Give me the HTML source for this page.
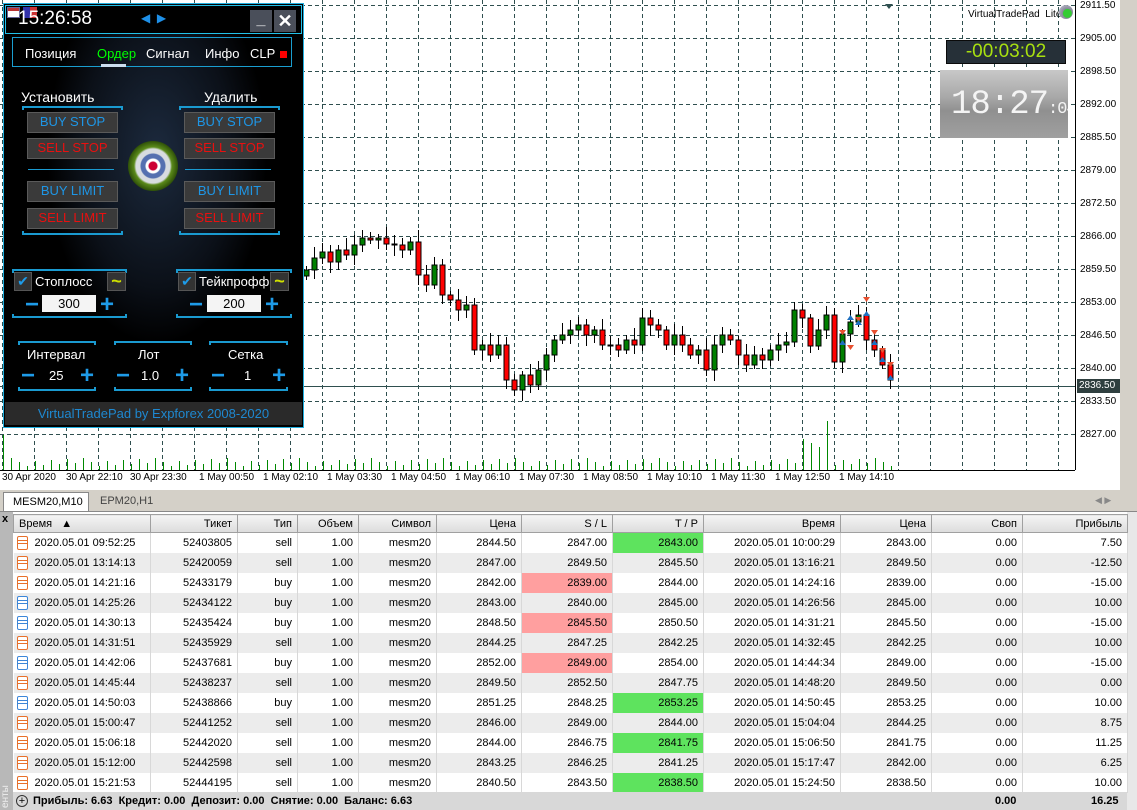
<!DOCTYPE html>
<html><head><meta charset="utf-8"><style>
*{margin:0;padding:0;box-sizing:border-box}
body{width:1137px;height:810px;overflow:hidden;background:#fff;font-family:"Liberation Sans",sans-serif;position:relative}
.a{position:absolute}
.pl{position:absolute;left:1080px;font-size:10px;color:#000}
.tl{position:absolute;top:472px;font-size:10px;color:#000}
.pb{position:absolute;background:#3a3a3a;border:1px solid #5a5a5a;font-size:13px;text-align:center;line-height:18px;height:21px}
.bl{color:#1e96e6}.rd{color:#e81010}
.br{position:absolute;height:4px;border:2px solid #1a9ad0;border-bottom:none}
.bb{position:absolute;height:4px;border:2px solid #1a9ad0;border-top:none}
.wt{color:#fff;position:absolute;font-size:14px}
.pm{position:absolute;color:#1e9be8;font-size:24px;font-weight:bold;line-height:20px}
table{border-collapse:collapse;position:absolute;left:13px;top:514px;font-size:11px;table-layout:fixed}
td,th{height:20px;padding:0 5px;text-align:right;white-space:nowrap;border-right:1px solid #d8d8d8}
th{font-weight:normal;border:1px solid #a0a0a0;height:18px;background:linear-gradient(#f4f4f4,#dcdcdc)}
tr.g td{background:#ececec}
td.p{background:#ff9f9f}td.t{background:#5ee35e}
td.f{text-align:left;padding-left:3px}
.ic{display:inline-block;width:11px;height:14px;border:1.5px solid #e8702a;border-radius:2px;vertical-align:middle;margin-right:7px;background:linear-gradient(#fff 3px,#e8702a 3px,#e8702a 4px,#fff 4px,#fff 6px,#e8702a 6px,#e8702a 7px,#fff 7px)}
.ib{border-color:#3c86d8;background:linear-gradient(#fff 3px,#3c86d8 3px,#3c86d8 4px,#fff 4px,#fff 6px,#3c86d8 6px,#3c86d8 7px,#fff 7px)}
</style></head><body>
<svg class="a" style="left:0;top:0" width="1137" height="490" id="ch">
<rect x="0" y="0" width="1075" height="470" fill="#fff"/>
<g id="grid" stroke="#2f4f4f" stroke-dasharray="4,3" stroke-width="1"></g>
<line x1="0" y1="386.5" x2="1075" y2="386.5" stroke="#2f4f4f"/>
<g id="cd"></g>
<line x1="1075.5" y1="0" x2="1075.5" y2="470" stroke="#000"/>
<line x1="0" y1="470.5" x2="1075" y2="470.5" stroke="#000"/>
<rect x="1120" y="0" width="17" height="490" fill="#d4d0c8"/>
<rect x="1077" y="379" width="43" height="14" fill="#2f3f3f"/>
<polygon points="885,4 893,4 889,9" fill="#2f4f4f"/>
</svg>
<div class="a" style="left:1079px;top:380px;font-size:10px;color:#fff">2836.50</div>
<div class="pl" style="top:0">2911.50</div><div class="pl" style="top:33px">2905.00</div><div class="pl" style="top:66px">2898.50</div><div class="pl" style="top:99px">2892.00</div><div class="pl" style="top:132px">2885.50</div><div class="pl" style="top:165px">2879.00</div><div class="pl" style="top:198px">2872.50</div><div class="pl" style="top:231px">2866.00</div><div class="pl" style="top:264px">2859.50</div><div class="pl" style="top:297px">2853.00</div><div class="pl" style="top:330px">2846.50</div><div class="pl" style="top:363px">2840.00</div><div class="pl" style="top:396px">2833.50</div><div class="pl" style="top:429px">2827.00</div>
<div class="tl" style="left:2px">30 Apr 2020</div><div class="tl" style="left:66px">30 Apr 22:10</div><div class="tl" style="left:130px">30 Apr 23:30</div><div class="tl" style="left:199px">1 May 00:50</div><div class="tl" style="left:263px">1 May 02:10</div><div class="tl" style="left:327px">1 May 03:30</div><div class="tl" style="left:391px">1 May 04:50</div><div class="tl" style="left:455px">1 May 06:10</div><div class="tl" style="left:519px">1 May 07:30</div><div class="tl" style="left:583px">1 May 08:50</div><div class="tl" style="left:647px">1 May 10:10</div><div class="tl" style="left:711px">1 May 11:30</div><div class="tl" style="left:775px">1 May 12:50</div><div class="tl" style="left:839px">1 May 14:10</div>
<div class="a" style="left:968px;top:9px;font-size:10px">VirtualTradePad&nbsp; Lite</div>
<div class="a" style="left:1059px;top:5px;width:14px;height:14px;border-radius:50%;background:radial-gradient(circle at 60% 60%,#3c3 0 35%,#889 40%,#ccd)"></div>
<div class="a" style="left:946px;top:40px;width:120px;height:24px;background:#263038;border:1px solid #0a0a0a;color:#a8e010;font-size:19px;text-align:center;line-height:22px">-00:03:02</div>
<div class="a" style="left:940px;top:70px;width:128px;height:68px;background:linear-gradient(#c8c8c8,#a8a8a8 40%,#909090 60%,#a0a0a0);overflow:hidden">
<div class="a" style="left:11px;top:16px;font-size:34px;color:#f4f4f4;font-family:'Liberation Mono',monospace;letter-spacing:-1px;white-space:nowrap">18:27<span style="font-size:17px">:04</span></div></div>

<!-- panel -->
<div class="a" style="left:3px;top:3px;width:301px;height:425px;background:radial-gradient(ellipse 110px 190px at 153px 150px,#1c2a3e,#0b1018 70%,#000);border:1px solid #22b0e0"></div>
<div class="a" style="left:5px;top:5px;width:297px;height:29px;border:1px solid #22c0e8;background:#000"></div>
<div class="a" style="left:7px;top:7px;width:13px;height:11px;background:linear-gradient(#b33 3px,#fff 3px);border:1px solid #669"></div>
<div class="a" style="left:23px;top:7px;width:14px;height:11px;background:linear-gradient(90deg,#33a 50%,#c33 50%)"></div>
<div class="a" style="left:18px;top:8px;color:#fff;font-size:19px">15:26:58</div>
<div class="a" style="left:141px;top:11px;color:#1e90e8;font-size:12px">◀&nbsp;&nbsp;▶</div>
<div class="a" style="left:250px;top:10px;width:22px;height:22px;background:#4a4f5a;color:#fff;font-size:16px;text-align:center;font-weight:bold;line-height:20px">_</div>
<div class="a" style="left:274px;top:10px;width:22px;height:22px;background:#4a4f5a;color:#fff;font-size:18px;text-align:center;font-weight:bold;line-height:22px">✕</div>
<div class="a" style="left:12px;top:37px;width:280px;height:30px;border:1px solid #1a9ed0"></div>
<div class="wt" style="left:25px;top:46px;font-size:13px">Позиция</div>
<div class="wt" style="left:97px;top:46px;font-size:13px;color:#00ff00">Ордер</div>
<div class="a" style="left:101px;top:64px;width:25px;height:3px;background:#cde"></div>
<div class="wt" style="left:146px;top:46px;font-size:13px">Сигнал</div>
<div class="wt" style="left:205px;top:46px;font-size:13px">Инфо</div>
<div class="wt" style="left:250px;top:46px;font-size:13px">CLP</div>
<div class="a" style="left:280px;top:51px;width:7px;height:7px;background:#f00"></div>
<div class="wt" style="left:21px;top:89px">Установить</div>
<div class="wt" style="left:204px;top:89px">Удалить</div>
<div class="br" style="left:22px;top:106px;width:101px"></div>
<div class="br" style="left:179px;top:106px;width:101px"></div>
<div class="pb bl" style="left:27px;top:112px;width:91px">BUY STOP</div>
<div class="pb rd" style="left:27px;top:138px;width:91px">SELL STOP</div>
<div class="pb bl" style="left:27px;top:181px;width:91px">BUY LIMIT</div>
<div class="pb rd" style="left:27px;top:208px;width:91px">SELL LIMIT</div>
<div class="pb bl" style="left:184px;top:112px;width:91px">BUY STOP</div>
<div class="pb rd" style="left:184px;top:138px;width:91px">SELL STOP</div>
<div class="pb bl" style="left:184px;top:181px;width:91px">BUY LIMIT</div>
<div class="pb rd" style="left:184px;top:208px;width:91px">SELL LIMIT</div>
<div class="a" style="left:28px;top:169px;width:86px;height:1px;background:#1a9ad0"></div>
<div class="a" style="left:185px;top:169px;width:86px;height:1px;background:#1a9ad0"></div>
<div class="bb" style="left:22px;top:231px;width:101px"></div>
<div class="bb" style="left:179px;top:231px;width:101px"></div>
<div class="a" style="left:128px;top:141px;width:50px;height:50px;border-radius:50%;background:radial-gradient(circle,#c03 0 4px,#fff 5px 7px,#5570b0 8px 12px,#d8dce0 13px 17px,#5a8a1a 19px,#2e5008 25px)"></div>
<!-- SL/TP -->
<div class="br" style="left:12px;top:269px;width:115px"></div>
<div class="a" style="left:14px;top:272px;width:18px;height:19px;background:#333;border:1px solid #555;color:#1e9be8;font-size:14px;text-align:center">✔</div>
<div class="wt" style="left:35px;top:274px;font-size:13px">Стоплосс</div>
<div class="a" style="left:107px;top:272px;width:19px;height:19px;background:#333;border:1px solid #555;color:#cfe000;font-size:18px;line-height:16px;text-align:center;font-weight:bold">~</div>
<div class="pm" style="left:25px;top:295px">−</div>
<div class="a" style="left:42px;top:295px;width:54px;height:17px;background:#f4f4f4;font-size:13px;text-align:center;line-height:17px">300</div>
<div class="pm" style="left:100px;top:295px">+</div>
<div class="bb" style="left:12px;top:314px;width:115px"></div>
<div class="br" style="left:176px;top:269px;width:116px"></div>
<div class="a" style="left:178px;top:272px;width:18px;height:19px;background:#333;border:1px solid #555;color:#1e9be8;font-size:14px;text-align:center">✔</div>
<div class="wt" style="left:199px;top:274px;font-size:13px">Тейкпрофф</div>
<div class="a" style="left:270px;top:272px;width:19px;height:19px;background:#333;border:1px solid #555;color:#cfe000;font-size:18px;line-height:16px;text-align:center;font-weight:bold">~</div>
<div class="pm" style="left:189px;top:295px">−</div>
<div class="a" style="left:207px;top:295px;width:54px;height:17px;background:#f4f4f4;font-size:13px;text-align:center;line-height:17px">200</div>
<div class="pm" style="left:265px;top:295px">+</div>
<div class="bb" style="left:176px;top:314px;width:116px"></div>
<div class="br" style="left:18px;top:341px;width:78px"></div>
<div class="br" style="left:114px;top:341px;width:78px"></div>
<div class="br" style="left:209px;top:341px;width:79px"></div>
<div class="wt" style="left:27px;top:347px;font-size:13px">Интервал</div>
<div class="wt" style="left:138px;top:347px;font-size:13px">Лот</div>
<div class="wt" style="left:228px;top:347px;font-size:13px">Сетка</div>
<div class="pm" style="left:21px;top:366px">−</div><div class="wt" style="left:49px;top:368px;font-size:13px">25</div><div class="pm" style="left:80px;top:366px">+</div>
<div class="pm" style="left:116px;top:366px">−</div><div class="wt" style="left:141px;top:368px;font-size:13px">1.0</div><div class="pm" style="left:175px;top:366px">+</div>
<div class="pm" style="left:211px;top:366px">−</div><div class="wt" style="left:244px;top:368px;font-size:13px">1</div><div class="pm" style="left:272px;top:366px">+</div>
<div class="bb" style="left:18px;top:387px;width:78px"></div>
<div class="bb" style="left:114px;top:387px;width:78px"></div>
<div class="bb" style="left:209px;top:387px;width:79px"></div>
<div class="a" style="left:5px;top:402px;width:297px;height:23px;background:#2a2a2a;color:#1e88d0;font-size:13px;text-align:center;line-height:23px">VirtualTradePad by Expforex 2008-2020</div>

<!-- tabs -->
<div class="a" style="left:0;top:490px;width:1137px;height:22px;background:#d4d0c8;border-bottom:1px solid #888"></div>
<div class="a" style="left:3px;top:492px;width:86px;height:19px;background:#fff;border:1px solid #888;border-bottom:none;font-size:11px;padding:3px 0 0 9px">MESM20,M10</div>
<div class="a" style="left:100px;top:495px;font-size:11px;color:#444">EPM20,H1</div>
<div class="a" style="left:1095px;top:495px;font-size:9px;color:#888">◀ ▶</div>
<div class="a" style="left:0;top:512px;width:13px;height:298px;background:#b8b8b8"></div>
<div class="a" style="left:2px;top:513px;font-size:11px;font-weight:bold">x</div>
<div class="a" style="left:0;font-size:10px;color:#eee;transform:rotate(-90deg);transform-origin:0 0;top:808px">енты</div>
<div class="a" style="left:1127px;top:512px;width:10px;height:298px;background:#e8e8e8"></div>
<table>
<colgroup><col style="width:137px"><col style="width:87px"><col style="width:60px"><col style="width:61px"><col style="width:78px"><col style="width:85px"><col style="width:91px"><col style="width:91px"><col style="width:137px"><col style="width:91px"><col style="width:91px"><col style="width:105px"></colgroup>
<tr><th style="text-align:left">Время &nbsp;&nbsp;▲</th><th>Тикет</th><th>Тип</th><th>Объем</th><th>Символ</th><th>Цена</th><th>S / L</th><th>T / P</th><th>Время</th><th>Цена</th><th>Своп</th><th>Прибыль</th></tr>
<tr><td class="f"><i class="ic"></i>2020.05.01 09:52:25</td><td>52403805</td><td>sell</td><td>1.00</td><td>mesm20</td><td>2844.50</td><td>2847.00</td><td class="t">2843.00</td><td>2020.05.01 10:00:29</td><td>2843.00</td><td>0.00</td><td>7.50</td></tr>
<tr class="g"><td class="f"><i class="ic"></i>2020.05.01 13:14:13</td><td>52420059</td><td>sell</td><td>1.00</td><td>mesm20</td><td>2847.00</td><td class="p">2849.50</td><td>2845.50</td><td>2020.05.01 13:16:21</td><td>2849.50</td><td>0.00</td><td>-12.50</td></tr>
<tr><td class="f"><i class="ic"></i>2020.05.01 14:21:16</td><td>52433179</td><td>buy</td><td>1.00</td><td>mesm20</td><td>2842.00</td><td class="p">2839.00</td><td>2844.00</td><td>2020.05.01 14:24:16</td><td>2839.00</td><td>0.00</td><td>-15.00</td></tr>
<tr class="g"><td class="f"><i class="ic ib"></i>2020.05.01 14:25:26</td><td>52434122</td><td>buy</td><td>1.00</td><td>mesm20</td><td>2843.00</td><td>2840.00</td><td class="t">2845.00</td><td>2020.05.01 14:26:56</td><td>2845.00</td><td>0.00</td><td>10.00</td></tr>
<tr><td class="f"><i class="ic ib"></i>2020.05.01 14:30:13</td><td>52435424</td><td>buy</td><td>1.00</td><td>mesm20</td><td>2848.50</td><td class="p">2845.50</td><td>2850.50</td><td>2020.05.01 14:31:21</td><td>2845.50</td><td>0.00</td><td>-15.00</td></tr>
<tr class="g"><td class="f"><i class="ic"></i>2020.05.01 14:31:51</td><td>52435929</td><td>sell</td><td>1.00</td><td>mesm20</td><td>2844.25</td><td>2847.25</td><td class="t">2842.25</td><td>2020.05.01 14:32:45</td><td>2842.25</td><td>0.00</td><td>10.00</td></tr>
<tr><td class="f"><i class="ic ib"></i>2020.05.01 14:42:06</td><td>52437681</td><td>buy</td><td>1.00</td><td>mesm20</td><td>2852.00</td><td class="p">2849.00</td><td>2854.00</td><td>2020.05.01 14:44:34</td><td>2849.00</td><td>0.00</td><td>-15.00</td></tr>
<tr class="g"><td class="f"><i class="ic"></i>2020.05.01 14:45:44</td><td>52438237</td><td>sell</td><td>1.00</td><td>mesm20</td><td>2849.50</td><td>2852.50</td><td>2847.75</td><td>2020.05.01 14:48:20</td><td>2849.50</td><td>0.00</td><td>0.00</td></tr>
<tr><td class="f"><i class="ic ib"></i>2020.05.01 14:50:03</td><td>52438866</td><td>buy</td><td>1.00</td><td>mesm20</td><td>2851.25</td><td>2848.25</td><td class="t">2853.25</td><td>2020.05.01 14:50:45</td><td>2853.25</td><td>0.00</td><td>10.00</td></tr>
<tr class="g"><td class="f"><i class="ic"></i>2020.05.01 15:00:47</td><td>52441252</td><td>sell</td><td>1.00</td><td>mesm20</td><td>2846.00</td><td>2849.00</td><td>2844.00</td><td>2020.05.01 15:04:04</td><td>2844.25</td><td>0.00</td><td>8.75</td></tr>
<tr><td class="f"><i class="ic"></i>2020.05.01 15:06:18</td><td>52442020</td><td>sell</td><td>1.00</td><td>mesm20</td><td>2844.00</td><td>2846.75</td><td class="t">2841.75</td><td>2020.05.01 15:06:50</td><td>2841.75</td><td>0.00</td><td>11.25</td></tr>
<tr class="g"><td class="f"><i class="ic"></i>2020.05.01 15:12:00</td><td>52442598</td><td>sell</td><td>1.00</td><td>mesm20</td><td>2843.25</td><td>2846.25</td><td>2841.25</td><td>2020.05.01 15:17:47</td><td>2842.00</td><td>0.00</td><td>6.25</td></tr>
<tr><td class="f"><i class="ic"></i>2020.05.01 15:21:53</td><td>52444195</td><td>sell</td><td>1.00</td><td>mesm20</td><td>2840.50</td><td>2843.50</td><td class="t">2838.50</td><td>2020.05.01 15:24:50</td><td>2838.50</td><td>0.00</td><td>10.00</td></tr>
</table>
<div class="a" style="left:13px;top:792px;width:1114px;height:18px;background:#d8d8d8;font-size:11px;font-weight:bold;line-height:18px;padding-left:20px">Прибыль: 6.63&nbsp; Кредит: 0.00&nbsp; Депозит: 0.00&nbsp; Снятие: 0.00&nbsp; Баланс: 6.63</div>
<div class="a" style="left:16px;top:795px;width:12px;height:12px;border:1px solid #333;border-radius:50%;font-size:11px;line-height:10px;text-align:center">+</div>
<div class="a" style="left:995px;top:795px;font-size:11px;font-weight:bold">0.00</div>
<div class="a" style="left:1091px;top:795px;font-size:11px;font-weight:bold">16.25</div>
<script>
(function(){
var ns="http://www.w3.org/2000/svg";
function el(p,t,a){var e=document.createElementNS(ns,t);for(var k in a)e.setAttribute(k,a[k]);p.appendChild(e);return e}
var g=document.getElementById('grid');
for(var y=5;y<=435;y+=33)el(g,'line',{x1:0,y1:y+.5,x2:1075,y2:y+.5});
for(var x=2;x<1075;x+=32)el(g,'line',{x1:x+.5,y1:0,x2:x+.5,y2:470});
var c=document.getElementById('cd');
var cl=[270,258,252,262,250,255,245,238,240,238,244,245,250,242,275,285,265,295,300,310,305,350,345,355,345,380,390,375,385,370,355,340,335,330,325,335,330,345,345,350,340,345,318,325,330,345,335,345,355,350,370,345,335,340,355,365,355,360,350,345,342,310,318,346,330,315,362,334,322,315,340,350,365,380];
var vols=[];
for(var x=3;x<895;x+=8){var h=4+((x*13)%9);if(x>795&&x<835)h=20+((x*7)%30);if(x<10)h=35;el(c,'line',{x1:x+.5,y1:470-h,x2:x+.5,y2:470,stroke:'#080'});}
var prev=cl[0]+6;
for(var i=0;i<cl.length;i++){var cx=306+i*8,o=prev,cv=cl[i];var t0=Math.min(o,cv),b0=Math.max(o,cv);var hi=t0-4-(i*7%9),lo=b0+4+(i*5%8);
el(c,'line',{x1:cx+.5,y1:hi,x2:cx+.5,y2:lo,stroke:'#000'});
el(c,'rect',{x:cx-2,y:t0,width:5,height:Math.max(b0-t0,1),fill:cv<o?'#008000':'#ff0000',stroke:'#000'});
prev=cv;}
var arr=[[842,330,'#e85030'],[842,345,'#1e70c0'],[850,320,'#1e70c0'],[850,345,'#e85030'],[858,317,'#e85030'],[858,325,'#1e70c0'],[866,297,'#e85030'],[866,316,'#1e70c0'],[874,330,'#e85030'],[874,345,'#1e70c0'],[882,348,'#e85030'],[882,362,'#1e70c0'],[890,362,'#e85030'],[890,380,'#1e70c0']];
arr.forEach(function(a){el(c,'polygon',{points:(a[0]-3)+','+a[1]+' '+(a[0]+4)+','+a[1]+' '+(a[0]+0.5)+','+(a[1]+(a[2]=='#1e70c0'?-5:5)),fill:a[2]})});
})();
</script>
</body></html>
